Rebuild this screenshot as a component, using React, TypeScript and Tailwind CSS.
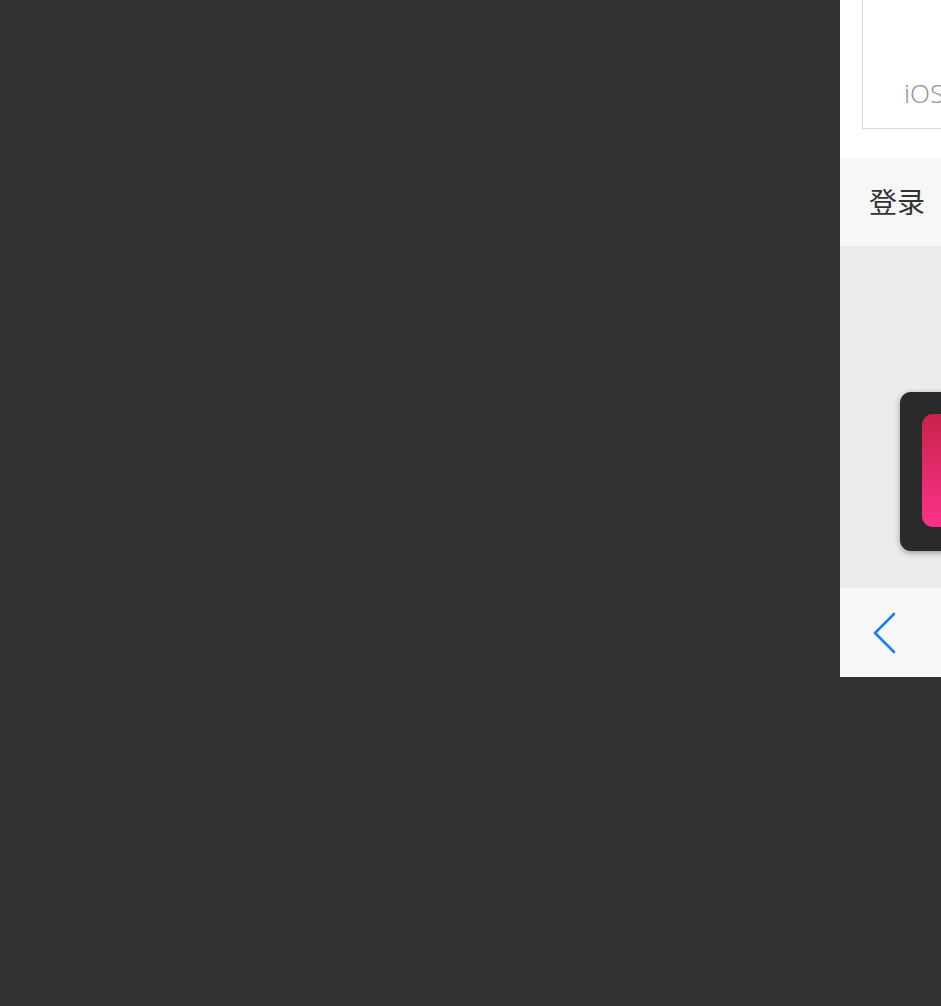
import React from "react";

export default function App() {
  return (
    <div className="w-[941px] h-[1006px] overflow-hidden bg-[#333333] flex items-start" style={{ fontFamily: '"Noto Sans", "Noto Sans CJK SC", sans-serif' }}>
      <div className="ml-[840px] w-[375px] shrink-0 flex flex-col">
        <div className="h-[158px] bg-white px-[22px]">
          <div className="-mt-[1px] h-[130px] border border-[#d6d6d6] flex items-end pl-[41px] pb-[22px]">
            <span className="text-[26px] leading-none text-[#9a9a9a] font-light whitespace-nowrap">iOS 应用</span>
          </div>
        </div>
        <div className="h-[88px] bg-[#f7f7f7] flex items-center pl-[29px]">
          <span className="text-[28px] leading-none text-[#333333] whitespace-nowrap">登录</span>
        </div>
        <div className="h-[342px] bg-[#ececec] pl-[60px] pt-[146px]">
          <div className="w-[300px] h-[159px] rounded-[11px] bg-[#2a2a2a] shadow-[0_2px_6px_rgba(0,0,0,0.35)] p-[22px]">
            <div className="h-[113px] w-[113px] rounded-[11px] bg-gradient-to-b from-[#c8234a] to-[#fe318a]" />
          </div>
        </div>
        <div className="h-[89px] bg-[#f8f8f8] flex items-center pl-[31px]">
          <svg width="26" height="44" viewBox="0 0 26 44" fill="none">
            <path d="M23 3 L4 22 L23 41" stroke="#1a80f7" strokeWidth="2.6" strokeLinecap="round" strokeLinejoin="round" />
          </svg>
        </div>
      </div>
    </div>
  );
}
